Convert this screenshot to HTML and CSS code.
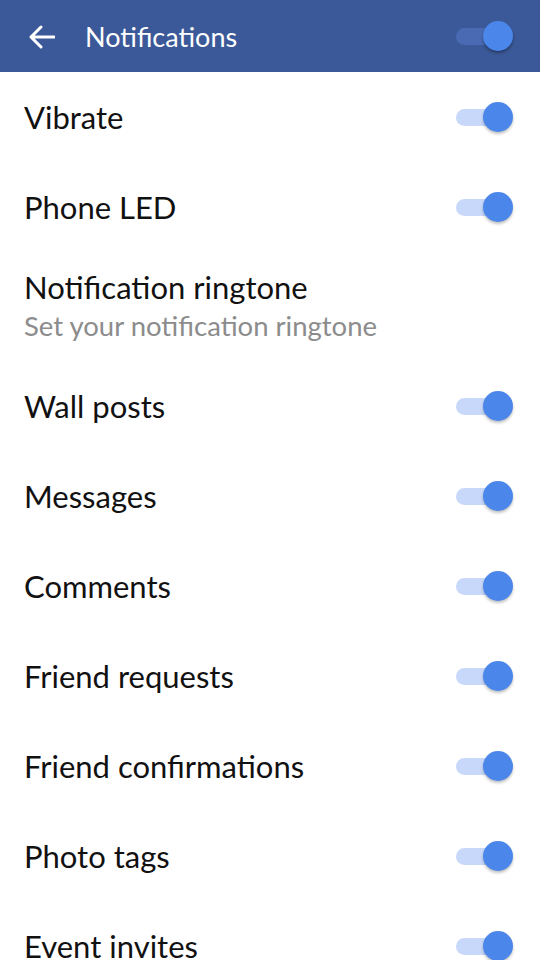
FILE: index.html
```html
<!DOCTYPE html>
<html lang="en">

<head>
    <meta charset="UTF-8">
    <meta name="viewport" content="width=device-width, initial-scale=1.0">
    <title>Notifications</title>

    <link rel="stylesheet" href="styles.css">
</head>

<body>
    <div class="toolbar">
        <svg class="back-icon" width="26" height="24" viewBox="0 0 26 24">
            <path d="M25 12H3M12 2L2 12l10 10" fill="none" stroke="#fff" stroke-width="3" stroke-linecap="round" stroke-linejoin="round"/>
        </svg>
        <span class="toolbar-title">Notifications</span>
        <div class="switch switch-dark"><span class="track"></span><span class="thumb"></span></div>
    </div>

    <div class="list">
        <div class="row">
            <span class="row-title">Vibrate</span>
            <div class="switch"><span class="track"></span><span class="thumb"></span></div>
        </div>
        <div class="row">
            <span class="row-title">Phone LED</span>
            <div class="switch"><span class="track"></span><span class="thumb"></span></div>
        </div>
        <div class="row row-tall">
            <div class="row-text">
                <span class="row-title">Notification ringtone</span>
                <span class="row-sub">Set your notification ringtone</span>
            </div>
        </div>
        <div class="row">
            <span class="row-title">Wall posts</span>
            <div class="switch"><span class="track"></span><span class="thumb"></span></div>
        </div>
        <div class="row">
            <span class="row-title">Messages</span>
            <div class="switch"><span class="track"></span><span class="thumb"></span></div>
        </div>
        <div class="row">
            <span class="row-title">Comments</span>
            <div class="switch"><span class="track"></span><span class="thumb"></span></div>
        </div>
        <div class="row">
            <span class="row-title">Friend requests</span>
            <div class="switch"><span class="track"></span><span class="thumb"></span></div>
        </div>
        <div class="row">
            <span class="row-title">Friend confirmations</span>
            <div class="switch"><span class="track"></span><span class="thumb"></span></div>
        </div>
        <div class="row">
            <span class="row-title">Photo tags</span>
            <div class="switch"><span class="track"></span><span class="thumb"></span></div>
        </div>
        <div class="row">
            <span class="row-title">Event invites</span>
            <div class="switch"><span class="track"></span><span class="thumb"></span></div>
        </div>
    </div>
</body>

</html>
```

FILE: styles.css
```css
:root {
    --blue: #3b5998;
    --thumb: #4b87ea;
    --track: #c7d8fb;
    --text: #111111;
    --sub: #8c8c8c;
}

* {
    margin: 0;
    padding: 0;
    box-sizing: border-box;
}

body {
    background-color: #ffffff;
    font-family: Lato, "Open Sans", sans-serif;
    color: var(--text);
    width: 540px;
    height: 960px;
    overflow: hidden;
}

.toolbar {
    height: 72px;
    background-color: var(--blue);
    display: flex;
    align-items: center;
    padding: 0 27px 0 29px;
}

.back-icon {
    flex: none;
    margin-top: 1px;
}

.toolbar-title {
    flex: 1;
    color: #ffffff;
    font-size: 27px;
    margin-left: 30px;
}

.row {
    height: 90px;
    display: flex;
    align-items: center;
    justify-content: space-between;
    padding: 0 27px 0 24px;
}

.row-tall {
    height: 109px;
}

.row-text {
    display: flex;
    flex-direction: column;
}

.row-title {
    font-size: 31px;
    line-height: 36px;
}

.row-sub {
    font-size: 27.5px;
    line-height: 36px;
    color: var(--sub);
    margin-top: 3px;
}

.switch {
    position: relative;
    width: 58px;
    height: 30px;
    flex: none;
}

.switch .track {
    position: absolute;
    left: 1px;
    top: 7px;
    width: 50px;
    height: 17px;
    border-radius: 9px;
    background-color: var(--track);
}

.switch .thumb {
    position: absolute;
    right: 0;
    top: 0;
    width: 30px;
    height: 30px;
    border-radius: 50%;
    background-color: var(--thumb);
    box-shadow: 0 2px 3px rgba(0, 0, 0, 0.25);
}

.switch-dark .track {
    background-color: #4a6bb4;
}

.switch-dark .thumb {
    box-shadow: 0 2px 3px rgba(0, 0, 0, 0.35);
}
```
